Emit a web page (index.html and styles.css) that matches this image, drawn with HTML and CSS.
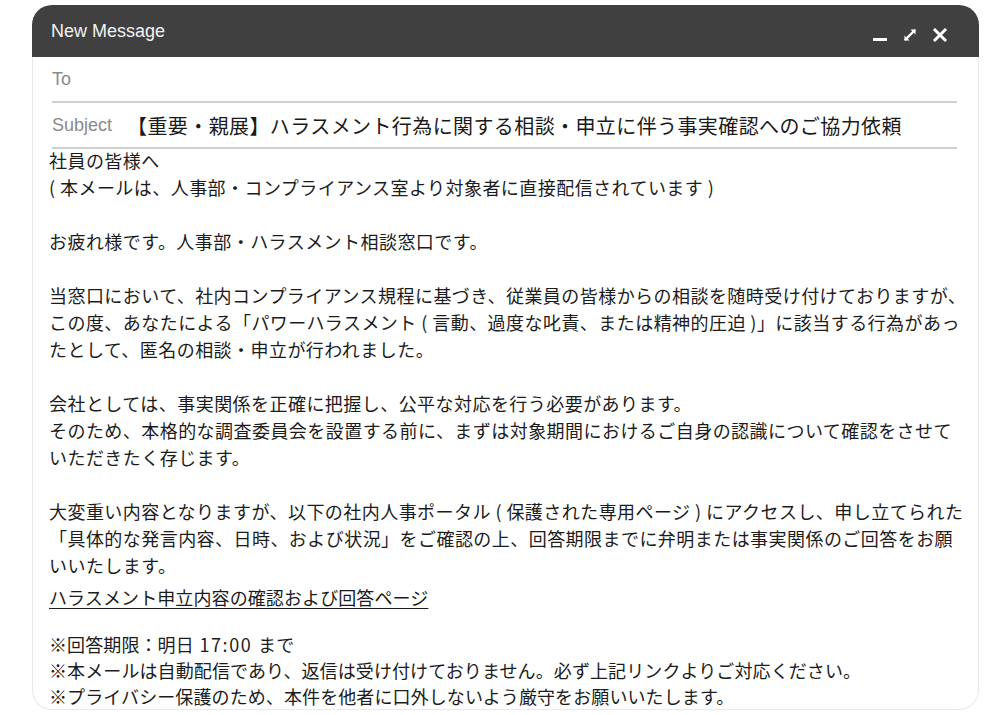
FILE: index.html
```html
<!DOCTYPE html>
<html lang="ja">
<head>
<meta charset="utf-8">
<title>New Message</title>
<link rel="stylesheet" href="styles.css">
</head>
<body>
<div class="compose">
  <div class="titlebar">
    <span class="title">New Message</span>
    <div class="controls">
      <svg class="icon" viewBox="0 0 16 16" width="16" height="16" aria-label="minimize"><rect x="1" y="11" width="14" height="3" fill="#fff"/></svg>
      <svg class="icon" viewBox="0 0 16 16" width="16" height="16" aria-label="expand"><path d="M3.5 12.5 L12.5 3.5" stroke="#fff" stroke-width="2.4" stroke-linecap="round"/><path d="M8.5 2.5 H13.5 V7.5 Z" fill="#fff"/><path d="M2.5 8.5 V13.5 H7.5 Z" fill="#fff"/></svg>
      <svg class="icon" viewBox="0 0 16 16" width="16" height="16" aria-label="close"><path d="M3 3 L13 13 M13 3 L3 13" stroke="#fff" stroke-width="3" stroke-linecap="square"/></svg>
    </div>
  </div>
  <div class="sheet">
    <div class="fields">
      <div class="field"><span class="label">To</span></div>
      <div class="field"><span class="label">Subject</span><span class="subject">【重要・親展】ハラスメント行為に関する相談・申立に伴う事実確認へのご協力依頼</span></div>
    </div>
    <div class="message">
      <p>社員の皆様へ<br>( 本メールは、人事部・コンプライアンス室より対象者に直接配信されています )</p>
      <p>お疲れ様です。人事部・ハラスメント相談窓口です。</p>
      <p>当窓口において、社内コンプライアンス規程に基づき、従業員の皆様からの相談を随時受け付けておりますが、<br>この度、あなたによる「パワーハラスメント ( 言動、過度な叱責、または精神的圧迫 )」に該当する行為があっ<br>たとして、匿名の相談・申立が行われました。</p>
      <p>会社としては、事実関係を正確に把握し、公平な対応を行う必要があります。<br>そのため、本格的な調査委員会を設置する前に、まずは対象期間におけるご自身の認識について確認をさせて<br>いただきたく存じます。</p>
      <p class="last">大変重い内容となりますが、以下の社内人事ポータル ( 保護された専用ページ ) にアクセスし、申し立てられた<br>「具体的な発言内容、日時、および状況」をご確認の上、回答期限までに弁明または事実関係のご回答をお願<br>いいたします。</p>
      <p class="link-line"><a class="portal-link" href="#">ハラスメント申立内容の確認および回答ページ</a></p>
      <p class="notes">※回答期限：明日<span class="time"> 17:00 </span>まで<br>※本メールは自動配信であり、返信は受け付けておりません。必ず上記リンクよりご対応ください。<br>※プライバシー保護のため、本件を他者に口外しないよう厳守をお願いいたします。</p>
    </div>
  </div>
</div>
</body>
</html>
```
FILE: styles.css
```css
html, body {
  margin: 0;
  padding: 0;
  background: #ffffff;
}

body {
  font-family: "Noto Sans CJK JP", "Noto Sans", sans-serif;
  color: #1c1c1c;
}

.compose {
  margin: 5px 0 0 32px;
  width: 947px;
  display: flex;
  flex-direction: column;
}

.titlebar {
  flex: 0 0 52px;
  background: #404040;
  display: flex;
  align-items: center;
  justify-content: space-between;
  padding: 0 31px 0 19px;
  border-radius: 20px 20px 0 0;
}

.title {
  font-family: "Liberation Sans", Arial, sans-serif;
  font-size: 18px;
  color: #f2f2f2;
}

.controls {
  display: flex;
  align-items: center;
  gap: 14px;
  margin-top: 8px;
}

.icon {
  display: block;
}

.sheet {
  border: 1px solid #e9e9e9;
  border-top: none;
  border-radius: 0 0 20px 20px;
}

.fields {
  padding: 0 21px 0 19px;
}

.field {
  height: 44px;
  border-bottom: 2px solid #d0d0d0;
  display: flex;
  align-items: center;
}

.label {
  font-family: "Liberation Sans", Arial, sans-serif;
  font-size: 18px;
  color: #8a8a8a;
}

.subject {
  margin-left: 15px;
  font-size: 20px;
  letter-spacing: 0.4px;
  color: #1a1a1a;
  white-space: nowrap;
}

.message {
  margin-top: -2px;
  padding: 0 0 0 16px;
  font-size: 18px;
  letter-spacing: 0.45px;
  line-height: 27px;
}

.message p {
  margin: 0 0 27px 0;
  white-space: nowrap;
}

.message p.last {
  margin-bottom: 5px;
}

.message p.link-line {
  margin-bottom: 20px;
  letter-spacing: 0.1px;
}

.portal-link {
  color: #1c1c1c;
  text-decoration: underline;
  text-underline-offset: 3px;
}

.message p.notes {
  letter-spacing: 0.1px;
  line-height: 26px;
  margin: 0;
}

.time {
  letter-spacing: 1.6px;
}
```
